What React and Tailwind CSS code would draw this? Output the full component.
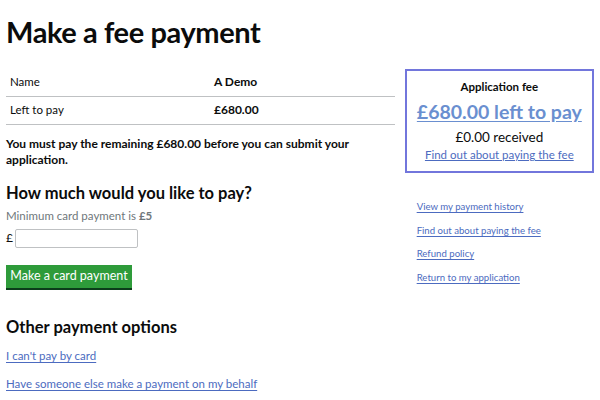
export default function App() {
  const link = "text-[#4c6bc0] underline underline-offset-2";
  return (
    <div className="w-[600px] h-[400px] overflow-hidden bg-white text-[#0b0c0c] px-[6px] pt-[13px]" style={{ fontFamily: 'Lato, "Liberation Sans", sans-serif' }}>
      <h1 className="text-[29px] font-bold leading-[38px] tracking-[-0.4px]">Make a fee payment</h1>
      <div className="flex gap-[10px] mt-[17px]">
        <div className="w-[390px]">
          <table className="w-full text-[11.5px]">
            <tbody>
              <tr className="border-b border-[#bfc1c3] h-[28px]">
                <td className="w-[208px] pl-[4px] leading-[14px]">Name</td>
                <td className="font-bold text-[12px]">A Demo</td>
              </tr>
              <tr className="border-b border-[#bfc1c3] h-[28px]">
                <td className="pl-[4px] leading-[14px]">Left to pay</td>
                <td className="font-bold text-[12px]">£680.00</td>
              </tr>
            </tbody>
          </table>
          <p className="text-[12px] font-bold leading-[16px] mt-[11px]">
            You must pay the remaining £680.00 before you can submit your application.
          </p>
          <h2 className="text-[16.5px] font-bold leading-[20px] mt-[15px]">How much would you like to pay?</h2>
          <p className="text-[11.5px] text-[#6f777b] leading-[16px] mt-[5px]">
            Minimum card payment is <span className="font-bold">£5</span>
          </p>
          <div className="flex items-center gap-[2px] mt-[5px] text-[12px]">
            <span>£</span>
            <input className="w-[123px] h-[19px] border border-[#bfc1c3] rounded-[2px]" />
          </div>
          <button className="mt-[17px] bg-[#2e9b3a] text-white text-[12.5px] w-[126px] h-[23px] shadow-[0_2px_0_#0b3d1a]">
            Make a card payment
          </button>
          <h2 className="text-[16.5px] font-bold leading-[20px] mt-[29px]">Other payment options</h2>
          <div className="mt-[11px] text-[11.5px] leading-[16px]">
            <a className={link}>I can't pay by card</a>
          </div>
          <div className="mt-[12px] text-[11.5px] leading-[16px]">
            <a className={link}>Have someone else make a payment on my behalf</a>
          </div>
        </div>
        <div className="w-[190px] mt-[1px]">
          <div className="border-2 border-[#7276dc] h-[104px] flex flex-col items-center pt-[8px]">
            <div className="text-[11.5px] font-bold leading-[15px]">Application fee</div>
            <a className="text-[19.5px] font-bold leading-[24px] mt-[6px] text-[#6a8fd0] underline underline-offset-2">£680.00 left to pay</a>
            <div className="text-[13.5px] leading-[17px] mt-[5px]">£0.00 received</div>
            <a className="text-[11.5px] leading-[15px] mt-[1px] text-[#4c6bc0] underline">Find out about paying the fee</a>
          </div>
          <div className="pl-[12px] mt-[27px] text-[9.6px] leading-[14px] flex flex-col gap-[9.5px]">
            <a className={link}>View my payment history</a>
            <a className={link}>Find out about paying the fee</a>
            <a className={link}>Refund policy</a>
            <a className={link}>Return to my application</a>
          </div>
        </div>
      </div>
    </div>
  );
}
